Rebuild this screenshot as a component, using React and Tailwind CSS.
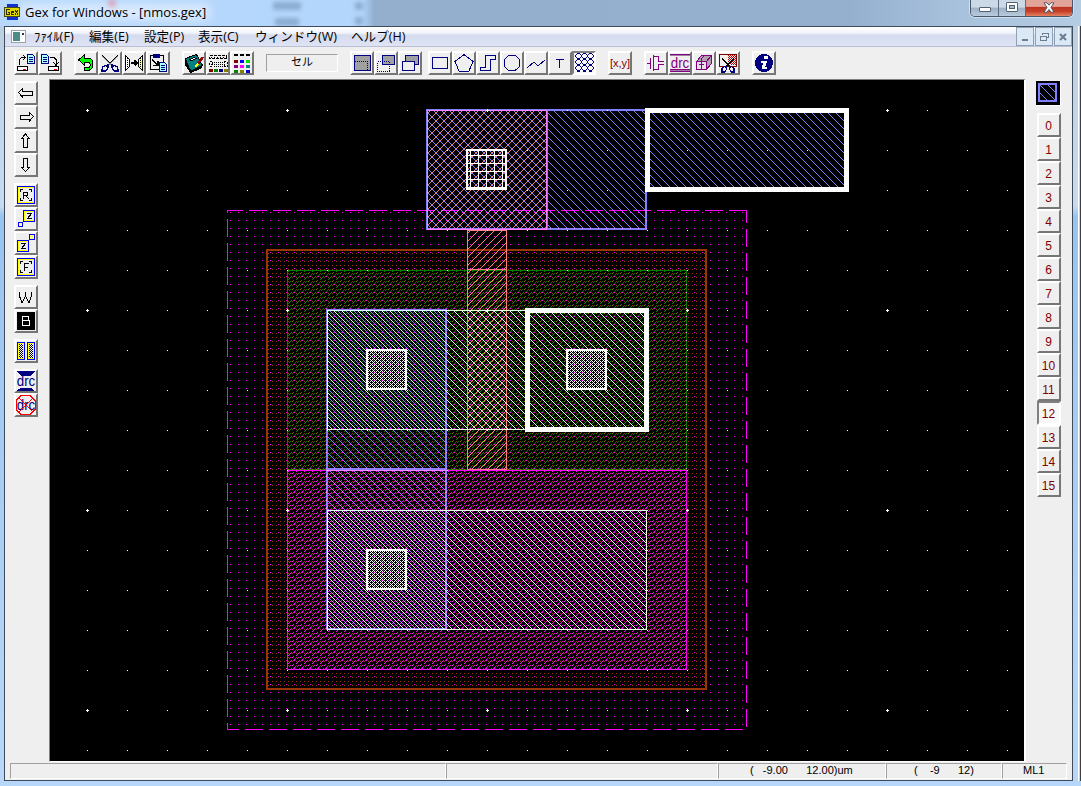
import React from "react";

const range = (n) => Array.from({ length: n }, (_, i) => i);

/* ---------- layout canvas ---------- */

const back = (n, phase) => range(n).map((y) => [(y + phase) % n, y]);
const forward = (n, phase) => range(n).map((y) => [(phase - y + 2 * n) % n, y]);
const dashed = [[0, 7], [1, 6], [2, 5], [3, 4], [5, 4], [6, 3], [7, 2], [4, 1], [5, 0], [1, 2], [2, 1]];

const fills = {
  metal: { n: 8, color: "#8080ff", pixels: back(8, 3) },
  poly: { n: 8, color: "#ff8080", pixels: forward(8, 4) },
  diff: { n: 8, color: "#e0ffe0", pixels: back(8, 7) },
  implant: { n: 8, color: "#008000", pixels: dashed },
  pimplant: { n: 8, color: "#ff00ff", pixels: dashed },
  area: { n: 8, color: "#ff00ff", pixels: [[6, 4]] },
  well: { n: 4, color: "#993300", pixels: [[0, 1]] },
  cont: { n: 4, color: "#ffffff", pixels: [...forward(4, 3), ...back(4, 3)] },
  via: { n: 8, color: "#ffffff", pixels: [...range(8).map((i) => [6, i]), ...range(8).map((i) => [i, 3])] },
};

/* One path holding every pixel of a tiled fill that lies inside the rectangle. */
function stipple(name, x0, y0, w, h) {
  const { n, pixels } = fills[name];
  let d = "";
  for (const [px, py] of pixels) {
    const sx = x0 + ((((px - x0) % n) + n) % n);
    const sy = y0 + ((((py - y0) % n) + n) % n);
    for (let y = sy; y < y0 + h; y += n) {
      for (let x = sx; x < x0 + w; x += n) d += `M${x} ${y}h1v1h-1z`;
    }
  }
  return d;
}

const mix = "mix-blend-lighten";

function Fill({ name, x, y, w, h }) {
  return <path d={stipple(name, x, y, w, h)} fill={fills[name].color} className={mix} />;
}

function Box({ x, y, w, h, s = 1, color, fill }) {
  return (
    <g className={mix}>
      {fill && <path d={stipple(fill, x, y, w, h)} fill={fills[fill].color} />}
      <rect x={x + s / 2} y={y + s / 2} width={w - s} height={h - s} fill="none" stroke={color} strokeWidth={s} />
    </g>
  );
}

function LayoutCanvas() {
  const xs = range(24).map((i) => 87 + i * 40);
  const ys = range(17).map((i) => 110 + i * 40);
  return (
    <svg className="isolate block h-[681px] w-[974px] bg-black" viewBox="50 80 974 681" shapeRendering="crispEdges">
      <Fill name="area" x={227} y={210} w={520} h={520} />
      <g stroke="#ff00ff" strokeWidth="1" className={mix}>
        <path d="M227 210.5H243M249 210.5H747" strokeDasharray="18 6" />
        <path d="M227.5 219V730" strokeDasharray="18 6" />
        <path d="M746.5 210V730" strokeDasharray="18 6" strokeDashoffset="5" />
        <path d="M227 729.5H239M245 729.5H747" strokeDasharray="18 6" />
        <path d="M227.5 210V213M227.5 726V730" />
      </g>
      <Box x={266} y={249} w={441} h={441} s={2} color="#993300" fill="well" />
      <Box x={287} y={270} w={400} h={200} color="#008000" fill="implant" />
      <Box x={287} y={470} w={400} h={200} color="#ff00ff" fill="pimplant" />
      <Box x={327} y={310} w={320} h={120} color="#e0ffe0" fill="diff" />
      <Box x={327} y={510} w={320} h={120} color="#e0ffe0" fill="diff" />
      <Box x={467} y={230} w={40} h={40} color="#ff8080" fill="poly" />
      <Box x={467} y={269} w={40} h={201} color="#ff8080" fill="poly" />
      <Box x={427} y={110} w={120} h={120} color="#ff8080" fill="poly" />
      <Box x={426} y={109} w={122} h={121} s={2} color="#8080ff" />
      <Box x={426} y={109} w={221} h={121} s={2} color="#8080ff" fill="metal" />
      <Box x={326} y={309} w={121} h={161} s={2} color="#8080ff" fill="metal" />
      <Box x={326} y={469} w={121} h={161} s={2} color="#8080ff" fill="metal" />
      <Fill name="metal" x={648} y={111} w={198} h={78} />
      <Box x={466} y={149} w={41} h={41} s={2} color="#fff" fill="via" />
      <Box x={366} y={349} w={41} h={41} s={2} color="#fff" fill="cont" />
      <Box x={566} y={349} w={41} h={41} s={2} color="#fff" fill="cont" />
      <Box x={366} y={549} w={41} h={41} s={2} color="#fff" fill="cont" />
      <Box x={645} y={108} w={204} h={84} s={5} color="#fff" />
      <Box x={525} y={308} w={124} h={124} s={5} color="#fff" />
      <g fill="#fff">
        {ys.map((y) => xs.map((x) => <rect key={x + "-" + y} x={x} y={y} width="1" height="1" />))}
        {range(5).map((i) =>
          range(4).map((j) => (
            <path key={i + "-" + j} d={`M${86 + i * 200} ${110 + j * 200}h3v1h-3zM${87 + i * 200} ${109 + j * 200}h1v3h-1z`} />
          ))
        )}
      </g>
    </svg>
  );
}

/* ---------- icons, drawn on a 24 unit grid ---------- */

function Icon({ children }) {
  return (
    <svg className="block size-6 shrink-0" viewBox="0 0 24 24" fill="none" stroke="#000" strokeWidth="1" shapeRendering="crispEdges">
      {children}
    </svg>
  );
}

const navy = "#000080";
const purple = "#800080";

const doc = (x, y) => (
  <g>
    <path d={`M${x + 0.5} ${y + 0.5}h5l2 2v7h-7z`} fill="#aff" stroke={navy} />
    <path d={`M${x + 2} ${y + 3.5}h4M${x + 2} ${y + 5.5}h4M${x + 2} ${y + 7.5}h4`} stroke={navy} />
  </g>
);

const icons = {
  open: (
    <>
      {doc(13, 3)}
      <path d="M5.500 14V8.500L7.500 6.500H11M9 4l2 2.500-2 2.500" />
      <rect x="3.500" y="15.500" width="10" height="4" fill="#fff" />
      <path d="M9 18h3" stroke="red" />
    </>
  ),
  save: (
    <>
      {doc(3, 3)}
      <path d="M12 6.500h4l2 2V14M15.500 11.500l2.500 3 2.500-3" />
      <rect x="10.500" y="15.500" width="10" height="4" fill="#fff" />
      <path d="M16 18h3" stroke="red" />
    </>
  ),
  undo: <path d="M4.500 9l6-5v3.500h4c6 0 6 10 0 12H10v-3h4c3 0 3-5 0-5h-3.500V14z" fill="#0f0" />,
  cut: (
    <>
      <path d="M4 4l12 12M20 4L8 16" strokeWidth="1" />
      <path d="M4 5l11 11M20 5L9 16" stroke="#888" />
      <path d="M10 14l-5 1.500-1.500 4.500h4l2.500-3zM14 14l5 1.500 1.500 4.500h-4l-2.500-3z" stroke={navy} strokeWidth="1.300" />
    </>
  ),
  mirror: (
    <>
      <path d="M3.500 4.500v15l4-4v-7z" fill="#fff" />
      <path d="M20.500 4.500v15l-4-4v-7z" fill="#ff8" />
      <path d="M5.500 7v10M18.500 7v10" strokeDasharray="1 1" />
      <path d="M8.500 12h7M12.500 9.500L15 12l-2.500 2.500" strokeWidth="1.500" />
    </>
  ),
  paste: (
    <>
      <rect x="4.500" y="4.500" width="13" height="14" rx="1" fill="#eee" />
      <rect x="7" y="3" width="7" height="4" fill={navy} stroke="none" />
      <path d="M6 9l6 5M12 10v4.500H7" strokeWidth="1.500" />
      {doc(13, 11)}
    </>
  ),
  book: (
    <>
      <path d="M3.500 7.500l11-4 6 11-10 5-3-1z" fill="#008080" />
      <path d="M4 9v5l5 7 11-5" strokeWidth="2" />
      <path d="M8 8.500l4-2 2 1-5 2.500z" fill="#fff" />
      <path d="M15 14l6-8" stroke="#a00000" strokeWidth="2.500" />
      <path d="M13 16l3-3" stroke="#ffff00" strokeWidth="2" />
    </>
  ),
  cells: (
    <>
      <path d="M3.500 4.500h17v3h-17z" strokeDasharray="3 1" />
      <path d="M5 6h14" strokeDasharray="1 2" />
      <path d="M3.500 10.500h3v3h-3zM3.500 15.500h3M18 10.500h3v5h-3z" strokeDasharray="2 1" />
      <path d="M8 11.500h9M8 13.500h9M8 15.500h9" strokeDasharray="1 1" />
      {["#800000", "#008000", "#000080", "#808000"].map((c, i) => (
        <rect key={c} x={3 + i * 5} y="18" width="4" height="3" fill={c} stroke="none" />
      ))}
    </>
  ),
  palette: (
    <>
      {["#000", "#000", "#000", "#800000", "#0000ff", "#00e000", "#800080", "#ff00ff", "#008080", "#008000", "#808000", "#0000c0"].map((c, i) => (
        <rect key={i} x={4 + (i % 3) * 6} y={4 + Math.floor(i / 3) * 5 - (i < 3 ? 1 : 0)} width="4" height={i < 3 ? 2 : 3} fill={c} stroke="none" />
      ))}
    </>
  ),
  select: (
    <>
      <rect x="4.500" y="4.500" width="16" height="15" fill="#a0a0a0" stroke={navy} />
      <path d="M5 10.500h12.500V19" stroke={navy} strokeDasharray="1 1" />
    </>
  ),
  partial: (
    <>
      <rect x="8.500" y="4.500" width="12" height="9" fill="#a0a0a0" stroke={navy} />
      <path d="M3.500 10.500h12v10h-12z" stroke={navy} strokeDasharray="1 1" />
    </>
  ),
  whole: (
    <>
      <rect x="7.500" y="4.500" width="13" height="9" fill="#a0a0a0" stroke={navy} />
      <rect x="4.500" y="10.500" width="12" height="9" fill="#efefef" stroke={navy} />
    </>
  ),
  rect: <path d="M4.500 6.500h15v11h-15z" stroke={navy} />,
  poly: <path d="M12 3.500l9 7-4 9.500H7l-4-9.500z" stroke={navy} />,
  path: <path d="M4.500 16.500h5v-12h10v4h-5v11h-10z" stroke={navy} />,
  circle: <circle cx="12" cy="12" r="8" stroke={navy} />,
  line: <path d="M3 17l7-6 4 4 7-6" stroke={navy} />,
  text: <path d="M8 8.500h8M11.500 8v9" stroke={navy} />,
  array: (
    <g stroke={navy}>
      {range(9).map((i) => (
        <path
          key={i}
          transform={`translate(${3 + (i % 3) * 6} ${2 + Math.floor(i / 3) * 6})`}
          d="M2 .5h3M2 5.500h3M1.500 1v1M5.500 1v1M1.500 4v1M5.500 4v1M.5 2v2M6.500 2v2"
        />
      ))}
      <path d="M5 20.500h3M11 20.500h3M17 20.500h3" />
    </g>
  ),
  tran: <path d="M3 12.500h3M6.500 7v11M9.500 4v16M9 5.500h5v5h6M9 18.500h5v-5h6M14.500 5v4M14.500 15v4" stroke={purple} />,
  block: (
    <g stroke={purple}>
      <path d="M4.500 10.500l5-6h10v8l-5 6h-10z" fill="#b0a0b0" />
      <path d="M4.500 10.500h10v8h-10z" fill="#e8e0e8" />
      <path d="M14.500 10.500l5-6M9 10.500v-2l3-4M7 13.500h5M9.500 11v7" />
    </g>
  ),
  cutarea: (
    <>
      <rect x="3.500" y="3.500" width="17" height="12" stroke="#800000" fill="#efefef" />
      <path d="M12 4.500h8M13 5.500h7M12 6.500h8M13 7.500h7M12 8.500h8M13 9.500h7M12 10.500h8M13 11.500h7M14 12.500h6M15 13.500h5" stroke="#c00000" strokeDasharray="1 1" />
      <path d="M6 8l9 8M18 8l-9 8" strokeWidth="1.500" />
      <path d="M10 15l-4 2v4h3l2-4zM14 15l4 2v4h-3l-2-4z" stroke={navy} strokeWidth="1.300" />
    </>
  ),
  info: (
    <>
      <circle cx="12" cy="12" r="9" fill={navy} stroke="none" />
      <path d="M12 4.500h3.500v3.500H12zM9 10h6l-1.800 6H15v2h-5.500l1.700-6H9z" fill="#fff" stroke="none" />
    </>
  ),
  left: <path d="M4.500 11.500l4-4v2.500h9.500v4H8.500v2z" />,
  right: <path d="M19.500 11.500l-4-4v2.500H6v4h9.500v2z" />,
  up: <path d="M11.500 5l4 4.500H13.500v9h-4v-9H7.500z" />,
  down: <path d="M11.500 18.500l4-4H13.500v-9h-4v9H7.500z" />,
};

const frameIcon = (
  <>
    <rect x="3.500" y="3.500" width="17" height="17" stroke="#0000ff" />
    <rect x="4.500" y="4.500" width="15" height="15" stroke="#ffff00" />
    <path d="M6.500 9V6.500H9M15 6.500h2.500V9M17.500 15v2.500H15M9 17.500H6.500V15" />
  </>
);

icons.frameR = (<>{frameIcon}<path d="M9.500 15.500v-6h4v3h-4M12 12.500l2.500 3.500" /></>);
icons.frameF = (<>{frameIcon}<path d="M10.500 16V8.500H15M10.500 12.500H14" /></>);
icons.zoomIn = (
  <>
    <rect x="9.500" y="3.500" width="11" height="11" stroke="#00f" />
    <rect x="10.500" y="4.500" width="9" height="9" stroke="#ff0" />
    <path d="M13 6.500h4.500l-4 5h4.500" />
    <rect x="4.500" y="15.500" width="4" height="4" stroke="#00f" fill="#ff8" />
  </>
);
icons.zoomOut = (
  <>
    <rect x="3.500" y="9.500" width="11" height="11" stroke="#00f" />
    <rect x="4.500" y="10.500" width="9" height="9" stroke="#ff0" />
    <path d="M7 12.500h4.500l-4 5h4.500" />
    <rect x="15.500" y="3.500" width="5" height="5" stroke="#00f" fill="#ff8" />
  </>
);
icons.w = <path d="M5.500 7v4l2.500 7 3.500-7 3.500 7 2.500-7V7M11.500 7v4" />;
icons.b = (
  <>
    <rect x="3" y="3" width="18" height="18" fill="#000" stroke="none" />
    <path d="M8.500 7.500h6v4h-6zM8.500 11.500h6.500v5H8.500z" stroke="#fff" />
  </>
);
icons.bars = (
  <>
    {[3, 13].map((x) => (
      <g key={x}>
        <rect x={x + 0.5} y="3.500" width="7" height="17" fill="#ff0" stroke="#00f" />
        <rect x={x + 2} y="5" width="4" height="14" fill="#fff" stroke="none" />
        {range(7).map((i) => (
          <path key={i} d={`M${x + 2} ${5.5 + i * 2}h4M${x + 3} ${6.5 + i * 2}h3`} strokeDasharray="1 1" />
        ))}
      </g>
    ))}
  </>
);
const drcLetters = (color) => (
  <text x="12" y="17" textAnchor="middle" fill={color} stroke="none" fontSize="14" textLength="18.500" lengthAdjust="spacingAndGlyphs" className="font-['Liberation_Sans',sans-serif]">
    drc
  </text>
);
icons.drc = (
  <>
    <path d="M2 3.500h20M2 18.500h20M2 20.500h20" stroke={purple} />
    <path d="M2 4.500h20M2 19.500h20" stroke="#a080a0" />
    {drcLetters(purple)}
  </>
);
icons.drcRun = (
  <>
    <path d="M2 2h19l-4 5H7zM2 22h19l-4-3H7z" fill={navy} stroke="none" />
    {drcLetters(navy)}
  </>
);
icons.drcOff = (
  <>
    {drcLetters(navy)}
    <path d="M7 2.500h9l5 5v9l-5 5H7l-5-5v-9zM5 5l14 14M19 5L5 19" stroke="#f00" />
  </>
);

/* ---------- chrome ---------- */

function ToolButton({ name, pressed, children }) {
  return (
    <div
      className={
        "flex size-6 shrink-0 items-center justify-center overflow-hidden border-2 " +
        (pressed
          ? "border-t-[#808080] border-l-[#808080] border-r-white border-b-white bg-[#f8f8f8]"
          : "border-t-white border-l-white border-r-[#767676] border-b-[#767676] bg-[#efefef]")
      }
    >
      {name ? <Icon>{icons[name]}</Icon> : children}
    </div>
  );
}

const toolGroups = [
  ["open", "save"],
  ["undo", "cut", "mirror", "paste"],
  ["book", "cells", "palette"],
];
const editGroups = [
  { gap: "ml-3", items: ["select", "partial", "whole"] },
  { gap: "ml-[6px]", items: ["rect", "poly", "path", "circle", "line", "text", "array"] },
];

function TitleBar() {
  return (
    <div className="relative flex h-[26px] shrink-0 overflow-hidden bg-[linear-gradient(90deg,#b7d8fc_0px,#b3d6fc_362px,#94afce_374px,#95b0cf_850px,#a8c2dd_960px,#b4cce2_1081px)]">
      <div className="absolute top-[2px] left-[273px] h-2 w-7 bg-[#7291b5] opacity-60 blur-[2px]" />
      <div className="absolute top-[18px] left-[275px] h-2 w-6 bg-[#7291b5] opacity-60 blur-[2px]" />
      <div className="absolute top-[2px] left-[355px] h-2 w-2 bg-[#7291b5] opacity-60 blur-[2px]" />
      <div className="absolute top-[17px] left-[355px] h-2 w-2 bg-[#7291b5] opacity-60 blur-[2px]" />
      <div className="absolute top-0 left-[108px] size-2 bg-[#d86a80] opacity-60 blur-[2px]" />
      <div className="absolute top-1 left-5 h-4 w-[190px] bg-white/50 blur-[5px]" />
      <svg className="relative mt-1 ml-1 size-4" viewBox="0 0 16 16" shapeRendering="crispEdges">
        <path d="M3 0h11v3H3zM3 13h11v3H3z" fill="#1030d0" />
        <rect x="0" y="3" width="16" height="10" fill="#4a4a10" />
        <rect x="1" y="4" width="14" height="8" fill="#e0d800" />
        <path d="M6 5.500H2.500v5H5.500v-2H4M10 8.500H7.500v2H10M7.500 8.500v-1.500H10M11 6l3 4.500M14 6l-3 4.500" fill="none" stroke="#303010" />
      </svg>
      <span className="relative ml-[5px] w-[190px] text-[13px] leading-6 whitespace-nowrap text-black">Gex for Windows - [nmos.gex]</span>
      <div className="relative mr-2 ml-auto flex h-[17px] w-[103px] overflow-hidden rounded-b-[5px] border border-t-0 border-[#48566b] shadow-[0_0_0_1px_#d0e0ef]">
        <div className="flex w-7 items-center justify-center border-r border-[#5b6b80] bg-[linear-gradient(#cbd8e6_0_45%,#9cb0c7_50%,#b9cbdd)]">
          <div className="mt-[2px] h-[5px] w-3 rounded-[1px] border border-[#536070] bg-white" />
        </div>
        <div className="flex w-[27px] items-center justify-center border-r border-[#5b6b80] bg-[linear-gradient(#cbd8e6_0_45%,#9cb0c7_50%,#b9cbdd)]">
          <div className="mb-[2px] flex h-[10px] w-3 items-center justify-center rounded-[1px] border border-[#536070] bg-white">
            <div className="h-1 w-[6px] border border-[#536070] bg-[#aabccf]" />
          </div>
        </div>
        <div className="flex flex-1 items-center justify-center bg-[linear-gradient(#e2a498_0_40%,#bd3420_45%,#c43e27_70%,#e58261)]">
          <svg className="mb-[2px] h-[11px] w-3" viewBox="0 0 12 11">
            <path d="M1 .8h3l2 2.400 2-2.400h3L8 5.300l3 4.900H8L6 7.500l-2 2.700H1l3-4.900z" fill="#fff" stroke="#505868" />
          </svg>
        </div>
      </div>
    </div>
  );
}

const mdiBox = "flex h-[19px] w-[18px] items-center justify-center border border-[#8fa1b5] bg-[#dbe9f7]";

function MenuItem({ width, children }) {
  return <span className={"shrink-0 whitespace-nowrap " + width}>{children}</span>;
}

function MenuBar() {
  return (
    <div className="flex h-[20px] shrink-0 items-center border-b border-[#b9bdd6] bg-[linear-gradient(#ffffff_0px,#f1f4fb_6px,#d5dbee_8px,#dfe4f4_19px)] text-[12.6px] leading-[18px]">
      <svg className="mr-[8px] ml-[6px] h-[13px] w-[15px]" viewBox="0 0 15 13" shapeRendering="crispEdges">
        <rect x=".5" y=".5" width="14" height="12" fill="#fff" stroke="#9aa3aa" />
        <rect x="2" y="2" width="7" height="9" fill="#4a8c88" />
        <path d="M11 3h2v2h-2z" fill="#336" />
      </svg>
      <MenuItem width="w-[55px] tracking-[0.1px]">ﾌｧｲﾙ(F)</MenuItem>
      <MenuItem width="w-[55px]">編集(E)</MenuItem>
      <MenuItem width="w-[54px]">設定(P)</MenuItem>
      <MenuItem width="w-[57px]">表示(C)</MenuItem>
      <MenuItem width="w-[96px]">ウィンドウ(W)</MenuItem>
      <MenuItem width="w-[60px]">ヘルプ(H)</MenuItem>
      <div className="ml-auto flex gap-[1px]">
        <div className={mdiBox}>
          <div className="mt-[7px] h-[2px] w-[6px] bg-[#6c7d90]" />
        </div>
        <div className={mdiBox}>
          <svg className="size-[9px]" viewBox="0 0 9 9" shapeRendering="crispEdges" fill="none" stroke="#6c7d90">
            <path d="M2.500 3V1.500h6v4H7M.5 4h6v4.500h-6zM2 1h6M0 4.500h6" />
          </svg>
        </div>
        <div className={mdiBox}>
          <svg className="size-[8px]" viewBox="0 0 8 8" stroke="#6c7d90" strokeWidth="2">
            <path d="M1 1l6 6M7 1L1 7" />
          </svg>
        </div>
      </div>
    </div>
  );
}

function Toolbar() {
  return (
    <div className="flex h-[32px] shrink-0 items-start pt-1 pl-[9px]">
      <div className="flex gap-3">
        {toolGroups.map((group, i) => (
          <div key={i} className="flex">
            {group.map((name) => (
              <ToolButton key={name} name={name} />
            ))}
          </div>
        ))}
      </div>
      <div className="mt-[3px] ml-3 h-[18px] w-[72px] border border-t-[#a0a0a0] border-r-white border-b-white border-l-[#a0a0a0] text-center text-[11px] leading-[14px]">セル</div>
      {editGroups.map((group, i) => (
        <div key={i} className={"flex " + group.gap}>
          {group.items.map((name) => (
            <ToolButton key={name} name={name} pressed={name === "array"} />
          ))}
        </div>
      ))}
      <div className="ml-3 flex">
        <ToolButton>
          <span className="font-['Liberation_Sans',sans-serif] text-[11px] leading-none text-[#800000]">[x,y]</span>
        </ToolButton>
      </div>
      <div className="ml-3 flex">
        {["tran", "drc", "block", "cutarea"].map((name) => (
          <ToolButton key={name} name={name} />
        ))}
      </div>
      <div className="ml-3 flex">
        <ToolButton name="info" />
      </div>
    </div>
  );
}

const sideGroups = [
  ["left", "right", "up", "down"],
  ["frameR", "zoomIn", "zoomOut", "frameF"],
  ["w", "b"],
  ["bars"],
  ["drcRun", "drcOff"],
];

function Sidebar() {
  return (
    <div className="flex w-[44px] shrink-0 flex-col gap-[6px] pt-[2px] pl-[9px]">
      {sideGroups.map((group, i) => (
        <div key={i}>
          {group.map((name) => (
            <ToolButton key={name} name={name} />
          ))}
        </div>
      ))}
    </div>
  );
}

function LayerPanel() {
  return (
    <div className="flex flex-1 flex-col pt-[2px] pl-[11px]">
      <svg className="mb-[7px] -ml-px block size-[25px]" viewBox="0 0 25 25" shapeRendering="crispEdges">
        <rect width="25" height="25" fill="#fff" />
        <rect width="24" height="24" fill="#000" />
        <rect x="3" y="3" width="17" height="17" fill="none" stroke="#8080ff" strokeWidth="2" />
        <path d="M4 12l7 7M4 4l15 15M12 4l7 7" stroke="#8080ff" />
      </svg>
      {range(16).map((n) => (
        <ToolButton key={n} pressed={n === 12}>
          <span className="mt-px mr-px font-['Liberation_Sans',sans-serif] text-[12px] leading-[12px] text-[#800000]">{n}</span>
        </ToolButton>
      ))}
    </div>
  );
}

const cell = "h-[16px] shrink-0 whitespace-pre border border-t-[#a0a0a0] border-l-[#a0a0a0] border-r-white border-b-white leading-[13px]";

function StatusBar() {
  return (
    <div className="flex h-[18px] shrink-0 pt-px pl-[5px] font-['Liberation_Sans',sans-serif] text-[11px]">
      <div className={cell + " w-[436px]"} />
      <div className={cell + " w-[272px]"} />
      <div className={cell + " w-[168px] pl-[31px]"}>{"(   -9.00      12.00)um"}</div>
      <div className={cell + " w-[116px] pl-[27px]"}>{"(    -9      12)"}</div>
      <div className={cell + " w-[65px] pl-[20px]"}>ML1</div>
    </div>
  );
}

export default function App() {
  return (
    <div className="flex h-[786px] w-[1081px] flex-col overflow-hidden bg-[#b5d5f8] font-['Open_Sans','Noto_Sans_CJK_JP',sans-serif] text-black">
      <TitleBar />
      <div className="flex h-[755px] shrink-0">
        <div className="w-1 shrink-0 bg-[linear-gradient(#bcd0e4_0px,#c8dcf0_180px,#99c4f0_190px,#b9d8f8_755px)]" />
        <div className="flex w-[1069px] shrink-0 flex-col border border-[#3f4b5b] bg-[#efefef]">
          <MenuBar />
          <Toolbar />
          <div className="flex h-[683px] shrink-0">
            <Sidebar />
            <div className="w-[977px] shrink-0 border-t border-r-2 border-b border-l border-t-[#808080] border-r-white border-b-white border-l-[#808080]">
              <LayoutCanvas />
            </div>
            <LayerPanel />
          </div>
          <StatusBar />
        </div>
        <div className="mr-px ml-0 w-[6px] shrink-0 border-r border-white bg-[linear-gradient(#bcd0e4_0px,#c8dcf0_180px,#99c4f0_190px,#b9d8f8_755px)]" />
        <div className="flex-1 bg-[#394047]" />
      </div>
      <div className="h-[5px] bg-[#b7d7fa]" />
    </div>
  );
}
